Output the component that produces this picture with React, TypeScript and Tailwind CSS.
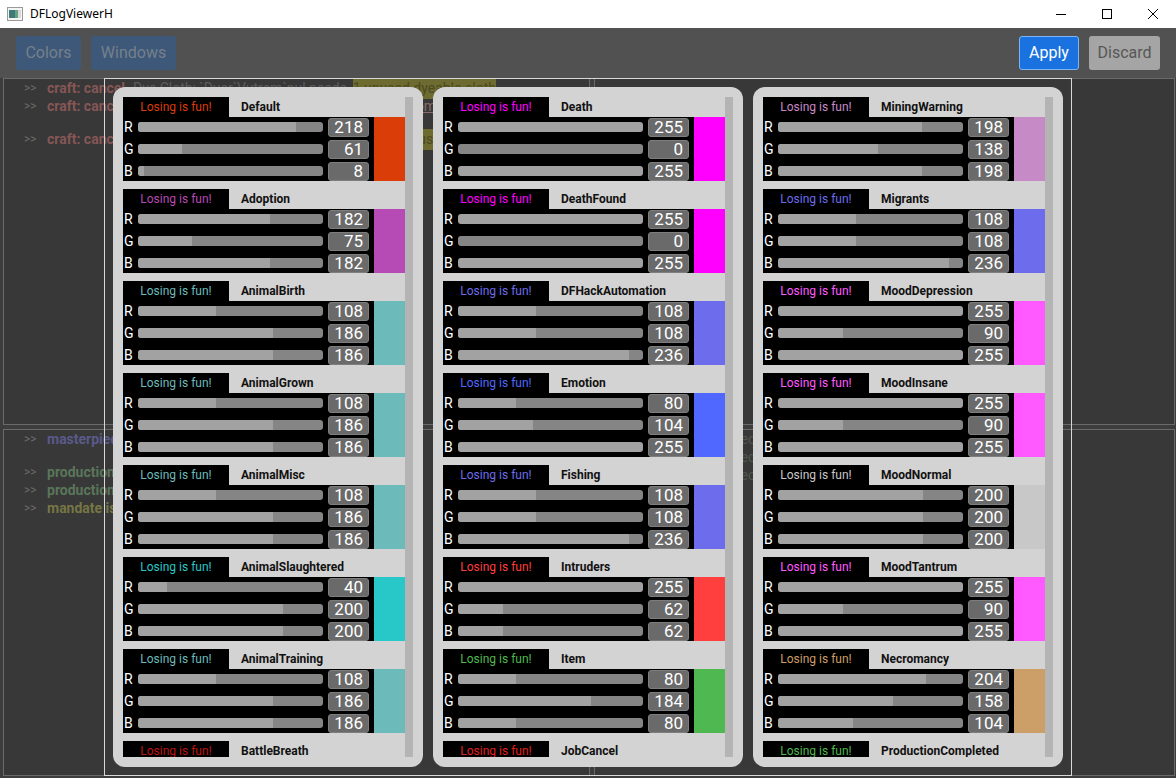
import React from "react";

type Entry = [string, number, number, number];

const columns: Entry[][] = [
  [
    ["Default", 218, 61, 8],
    ["Adoption", 182, 75, 182],
    ["AnimalBirth", 108, 186, 186],
    ["AnimalGrown", 108, 186, 186],
    ["AnimalMisc", 108, 186, 186],
    ["AnimalSlaughtered", 40, 200, 200],
    ["AnimalTraining", 108, 186, 186],
    ["BattleBreath", 190, 20, 20],
  ],
  [
    ["Death", 255, 0, 255],
    ["DeathFound", 255, 0, 255],
    ["DFHackAutomation", 108, 108, 236],
    ["Emotion", 80, 104, 255],
    ["Fishing", 108, 108, 236],
    ["Intruders", 255, 62, 62],
    ["Item", 80, 184, 80],
    ["JobCancel", 224, 32, 32],
  ],
  [
    ["MiningWarning", 198, 138, 198],
    ["Migrants", 108, 108, 236],
    ["MoodDepression", 255, 90, 255],
    ["MoodInsane", 255, 90, 255],
    ["MoodNormal", 200, 200, 200],
    ["MoodTantrum", 255, 90, 255],
    ["Necromancy", 204, 158, 104],
    ["ProductionCompleted", 80, 184, 80],
  ],
];

function Channel({ label, value }: { label: string; value: number }) {
  return (
    <div className="flex h-[20px] items-center pl-[1px] pr-[5px]">
      <span className="w-[14px] text-[14px] leading-none text-white">{label}</span>
      <div className="h-[10px] flex-1 overflow-hidden rounded-[3px] bg-[#858585]">
        <div className="h-full bg-[#a2a2a2]" style={{ width: `${(value / 255) * 100}%` }} />
      </div>
      <div className="ml-[5px] flex h-[19px] w-[41px] items-center justify-end rounded-[3px] border border-[#7e7e7e] bg-[#6a6a6a] pr-[5px] text-[17px] leading-none text-white">
        {value}
      </div>
    </div>
  );
}

function ColorEntry({ entry }: { entry: Entry }) {
  const [name, r, g, b] = entry;
  const rgb = `rgb(${r}, ${g}, ${b})`;
  return (
    <div className="mb-[8px] flex shrink-0 flex-col">
      {/* tab + name */}
      <div className="flex h-[20px] items-center">
        <div
          className="flex h-full w-[106px] items-center justify-center bg-black text-[12px] leading-none"
          style={{ color: rgb }}
        >
          Losing is fun!
        </div>
        <div className="ml-[12px] text-[12px] font-bold leading-none text-[#111111]">{name}</div>
      </div>
      {/* sliders + swatch */}
      <div className="flex h-[64px]">
        <div className="flex w-[251px] flex-col justify-between bg-black">
          <Channel label="R" value={r} />
          <Channel label="G" value={g} />
          <Channel label="B" value={b} />
        </div>
        <div className="w-[31px]" style={{ backgroundColor: rgb }} />
      </div>
    </div>
  );
}

function LogLine({ tag, tagColor, rest }: { tag: string; tagColor: string; rest?: React.ReactNode }) {
  return (
    <div className="flex h-[18px] items-center whitespace-nowrap pl-[20px] text-[14px]">
      <span className="w-[23px] text-[12px] text-[#6a6a6a]">&gt;&gt;</span>
      <span className="font-bold" style={{ color: tagColor }}>
        {tag}
      </span>
      {rest}
    </div>
  );
}

export default function App() {
  return (
    <div className="flex h-[778px] w-[1176px] flex-col overflow-hidden bg-[#3d3d3d] font-['Roboto',sans-serif]">
      {/* Title bar */}
      <div className="flex h-[28px] items-center bg-white">
        <svg width="16" height="14" viewBox="0 0 16 14" className="ml-[7px]">
          <rect x="0.5" y="0.5" width="15" height="13" fill="#f4f4f4" stroke="#9a9a9a" />
          <rect x="2" y="3" width="6" height="8" fill="#3f7a7a" />
          <rect x="8" y="3" width="3" height="8" fill="#6aa080" />
          <rect x="11" y="3" width="3" height="8" fill="#d8d8d8" />
        </svg>
        <span className="ml-[7px] font-['Noto_Sans',sans-serif] text-[12px] text-black">DFLogViewerH</span>
        <div className="ml-auto flex h-full items-center">
          <div className="flex h-full w-[46px] items-center justify-center">
            <svg width="10" height="10" viewBox="0 0 10 10">
              <line x1="0" y1="5.5" x2="10" y2="5.5" stroke="#000" strokeWidth="1" />
            </svg>
          </div>
          <div className="flex h-full w-[46px] items-center justify-center">
            <svg width="10" height="10" viewBox="0 0 10 10">
              <rect x="0.5" y="0.5" width="9" height="9" fill="none" stroke="#000" strokeWidth="1" />
            </svg>
          </div>
          <div className="flex h-full w-[46px] items-center justify-center">
            <svg width="10" height="10" viewBox="0 0 10 10">
              <path d="M0 0 L10 10 M10 0 L0 10" stroke="#000" strokeWidth="1" />
            </svg>
          </div>
        </div>
      </div>

      {/* Toolbar */}
      <div className="flex h-[50px] items-center gap-[10px] bg-[#515151] px-[16px] text-[16px]">
        <button className="h-[34px] w-[65px] rounded-[3px] bg-[#3d5878] text-[#76808c]">Colors</button>
        <button className="h-[34px] w-[85px] rounded-[3px] bg-[#3d5878] text-[#76808c]">Windows</button>
        <button className="ml-auto h-[34px] w-[60px] rounded-[3px] border border-[#7ab6f2] bg-[#1a72e0] text-white">
          Apply
        </button>
        <button className="h-[34px] w-[71px] rounded-[3px] bg-[#a5a5a5] text-[#575757]">Discard</button>
      </div>

      {/* Main area */}
      <div className="relative flex-1">
        <div className="grid h-[698px] grid-cols-[587px_581px] grid-rows-2 gap-x-[4px] gap-y-[4px] pl-[3px]">
          <div className="overflow-hidden border border-[#6a6a6a] bg-[#383838]">
            <LogLine
              tag="craft: cancel"
              tagColor="#865656"
              rest={
                <>
                  <span className="ml-[8px] text-[#5c5c5c]">Dye Cloth: `Duer`Vutrem`nul needs</span>
                  <span className="ml-[6px] bg-[#6e6b30] text-[#4c4a22]">1 unused dyeable cloth</span>
                </>
              }
            />
            <LogLine
              tag="craft: cancel"
              tagColor="#865656"
              rest={
                <>
                  <span className="ml-[8px] text-[#5c5c5c]">Make cloth robe: `Duer`Vutrem`nul needs</span>
                  <span className="ml-[6px] text-[#8a6a6a] underline">a loom</span>
                </>
              }
            />
            <div className="h-[15px]" />
            <LogLine
              tag="craft: cancel"
              tagColor="#865656"
              rest={
                <>
                  <span className="ml-[8px] text-[#5c5c5c]">Construct Door: Urist McMason needs</span>
                  <span className="ml-[6px] bg-[#6e6b30] text-[#4c4a22]">one unused block</span>
                </>
              }
            />
          </div>
          <div className="border border-[#6a6a6a] bg-[#383838]" />
          <div className="overflow-hidden border border-[#6a6a6a] bg-[#383838]">
            <LogLine
              tag="masterpiece: Urist has created a masterpiece"
              tagColor="#5a5a8a"
              rest={<span className="ml-[8px] bg-[#6e6b30] text-[#4c4a22]">a rock throne</span>}
            />
            <div className="h-[15px]" />
            <LogLine tag="production completed" tagColor="#5a765a" />
            <LogLine tag="production completed" tagColor="#5a765a" />
            <LogLine tag="mandate issued" tagColor="#767644" />
          </div>
          <div className="overflow-hidden border border-[#6a6a6a] bg-[#383838]">
            <div className="flex h-[18px] items-center whitespace-nowrap pl-[20px] text-[14px] text-[#4f574f]">
              Urist McSmith has become a legendary weaponsmith
            </div>
            <div className="flex h-[18px] items-center whitespace-nowrap pl-[20px] text-[14px] text-[#4f574f]">
              Urist McSmith has become a legendary armorsmith
            </div>
            <div className="flex h-[18px] items-center whitespace-nowrap pl-[20px] text-[14px] text-[#4f574f]">
              Urist McSmith has become a legendary bowyer
            </div>
          </div>
        </div>

        {/* Color editor overlay */}
        <div className="absolute left-[104px] top-0 flex h-[698px] w-[968px] gap-[10px] border border-[#d8d8d8] p-[8px]">
          {columns.map((col, i) => (
            <div key={i} className="flex h-[680px] w-[310px] shrink-0 rounded-[12px] bg-[#d3d3d3] p-[10px]">
              <div className="flex h-[660px] w-[282px] flex-col overflow-hidden">
                {col.map((e) => (
                  <ColorEntry key={e[0]} entry={e} />
                ))}
              </div>
              <div className="h-[660px] w-[8px] bg-[#b4b4b4]" />
            </div>
          ))}
        </div>
      </div>
    </div>
  );
}
